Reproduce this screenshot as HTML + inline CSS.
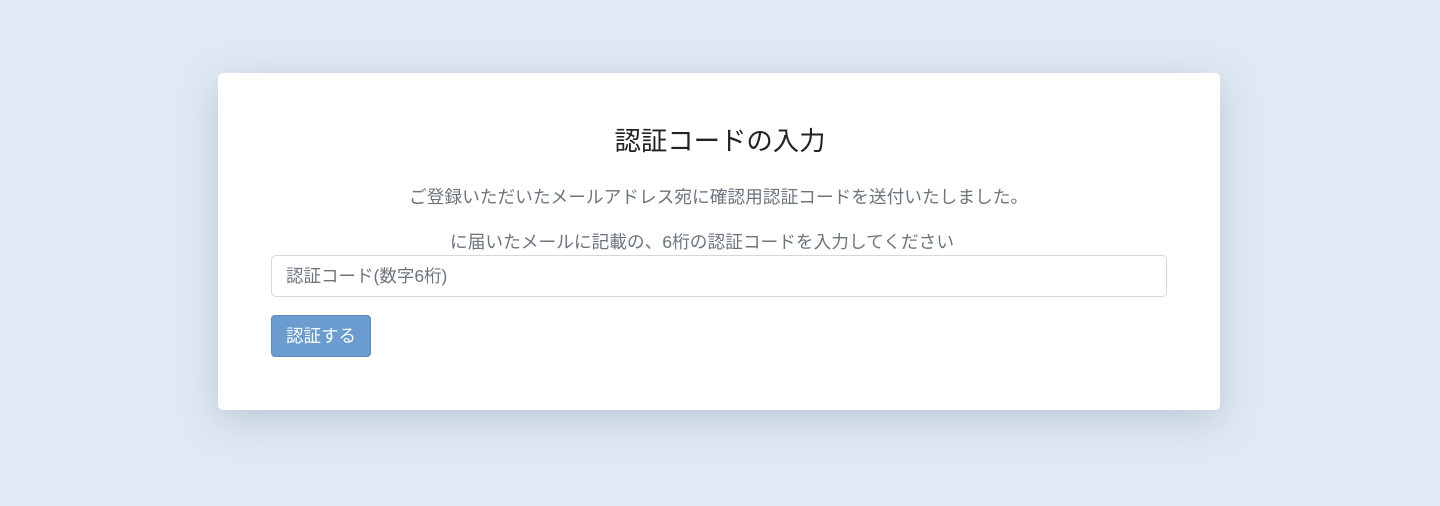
<!DOCTYPE html>
<html><head><meta charset="utf-8"><style>
body{margin:0;width:1440px;height:506px;background:#e0eaf4;font-family:"Liberation Sans","Noto Sans CJK JP",sans-serif;position:relative;overflow:hidden}
.card{position:absolute;left:218px;top:73px;width:1002px;height:337px;background:#fff;border-radius:5px;box-shadow:0 10px 40px rgba(120,135,160,.35)}
h1{position:absolute;left:0;right:0;top:124px;margin:0;text-align:center;font-size:26.4px;font-weight:400;color:#222;line-height:34px}
p{position:absolute;margin:0;white-space:nowrap;font-size:17.7px;color:#6c757d;line-height:24px}
.in{position:absolute;left:271px;top:255px;width:894px;height:40px;border:1px solid #d4d8dc;border-radius:5px;background:#fff;font-size:17.5px;color:#6c757d;line-height:40px;text-indent:14px}
.btn{position:absolute;left:271px;top:315px;width:98px;height:40px;border:1px solid #5b8bbf;border-radius:4px;background:#6b9ccf;color:#fff;font-size:17.5px;line-height:40px;text-align:center}
</style></head><body>
<div class="card"></div>
<h1>認証コードの入力</h1>
<p style="top:185px;left:409px">ご登録いただいたメールアドレス宛に確認用認証コードを送付いたしました。</p>
<p style="top:230px;left:450px">に届いたメールに記載の、6桁の認証コードを入力してください</p>
<div class="in">認証コード(数字6桁)</div>
<div class="btn">認証する</div>
</body></html>
